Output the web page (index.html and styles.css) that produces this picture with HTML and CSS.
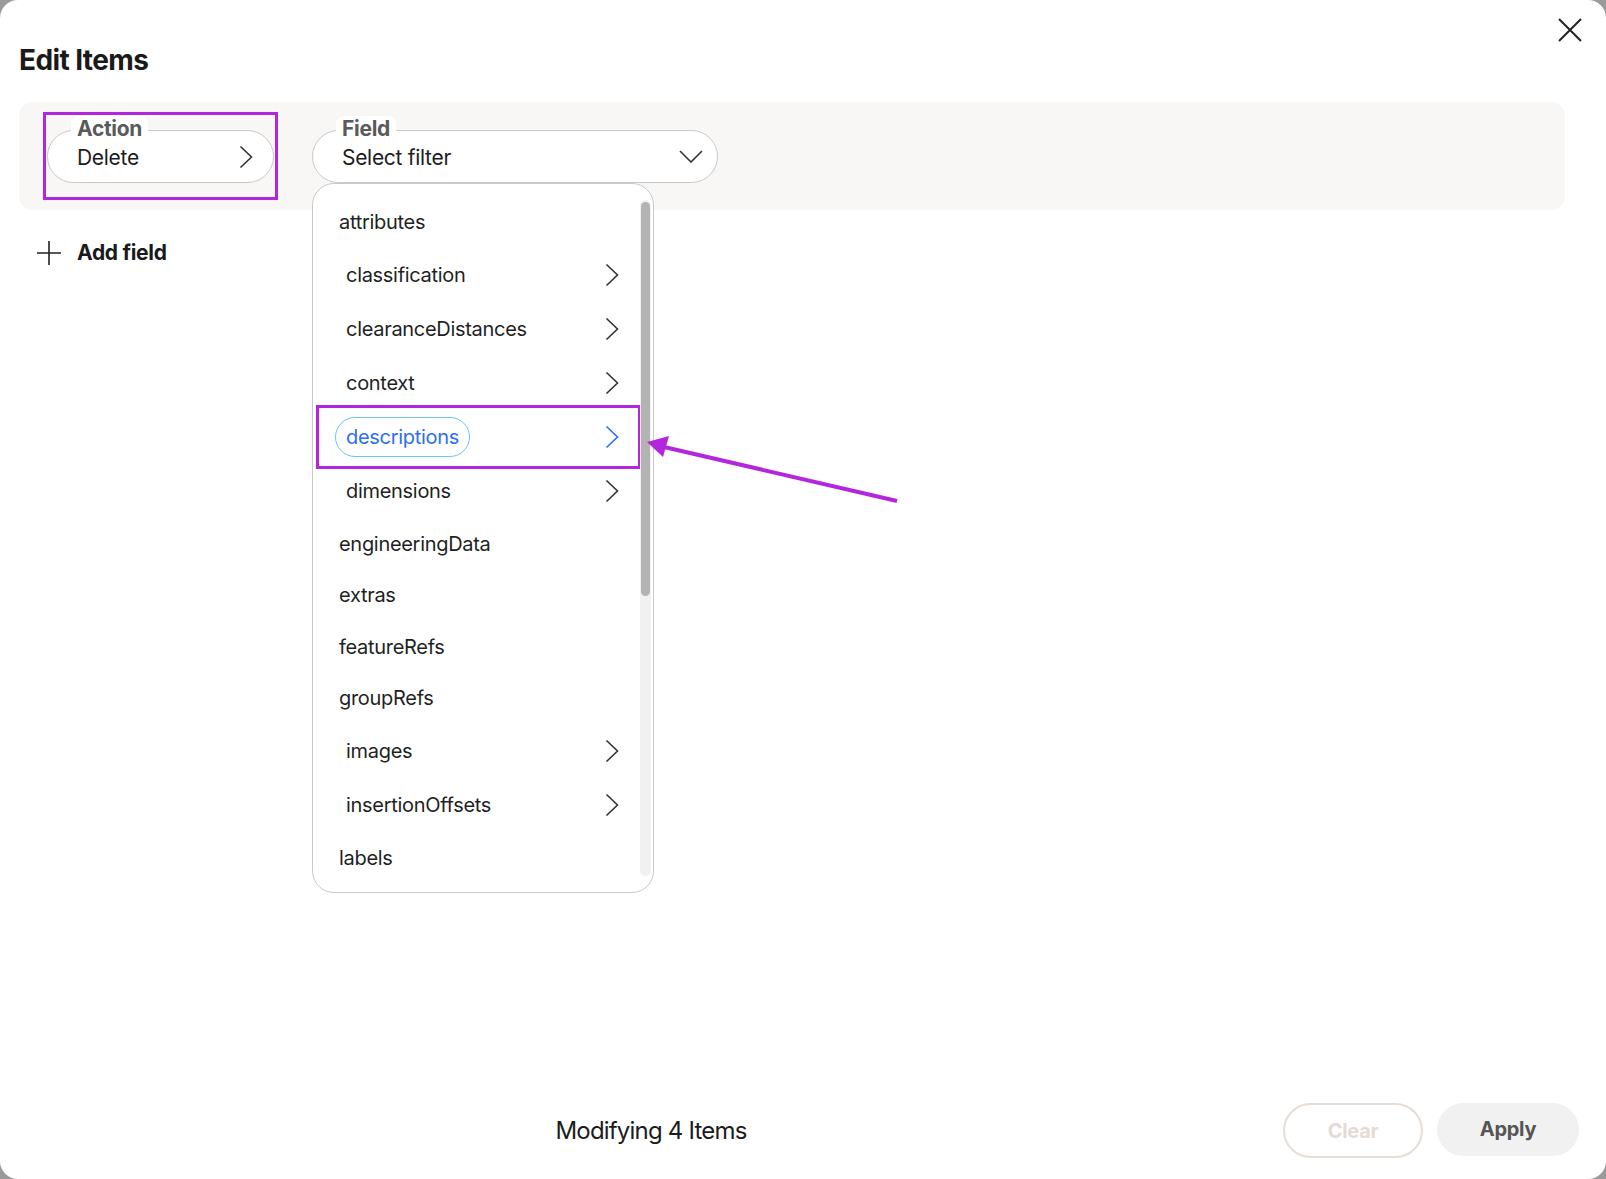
FILE: index.html
```html
<!DOCTYPE html>
<html lang="en">
<head>
  <meta charset="UTF-8" />
  <title>Edit Items</title>
  <link rel="stylesheet" href="styles.css">
</head>
<body>

  <div class="modal">
    <button class="close-btn" aria-label="Close">
      <svg width="24" height="24" viewBox="0 0 24 24"><path d="M1 1 L23 23 M23 1 L1 23" stroke="#222" stroke-width="2" fill="none"/></svg>
    </button>

    <h1 class="title">Edit Items</h1>

    <div class="filter-row">
      <div class="mark-box">
        <div class="pill-field action-field">
          <span class="pill-label">Action</span>
          <span class="pill-value">Delete</span>
          <svg class="chev-right" width="14" height="24" viewBox="0 0 14 24"><path d="M1.5 1.5 L12.5 12 L1.5 22.5" stroke="#333" stroke-width="1.6" fill="none"/></svg>
        </div>
      </div>

      <div class="field-wrap">
        <div class="pill-field select-field">
          <span class="pill-label">Field</span>
          <span class="pill-value">Select filter</span>
          <svg class="chev-down" width="24" height="13" viewBox="0 0 24 13"><path d="M1 1 L12 12 L23 1" stroke="#333" stroke-width="1.6" fill="none"/></svg>
        </div>

        <div class="dropdown">
          <ul class="option-list">
            <li class="opt">attributes</li>
            <li class="opt nested"><span class="opt-btn">classification</span><svg class="chev-right" width="14" height="24" viewBox="0 0 14 24"><path d="M1.5 1.5 L12.5 12 L1.5 22.5" stroke="#333" stroke-width="1.6" fill="none"/></svg></li>
            <li class="opt nested"><span class="opt-btn">clearanceDistances</span><svg class="chev-right" width="14" height="24" viewBox="0 0 14 24"><path d="M1.5 1.5 L12.5 12 L1.5 22.5" stroke="#333" stroke-width="1.6" fill="none"/></svg></li>
            <li class="opt nested"><span class="opt-btn">context</span><svg class="chev-right" width="14" height="24" viewBox="0 0 14 24"><path d="M1.5 1.5 L12.5 12 L1.5 22.5" stroke="#333" stroke-width="1.6" fill="none"/></svg></li>
            <li class="opt nested active"><span class="opt-btn">descriptions</span><svg class="chev-right" width="14" height="24" viewBox="0 0 14 24"><path d="M1.5 1.5 L12.5 12 L1.5 22.5" stroke="#2b6ef2" stroke-width="1.6" fill="none"/></svg><span class="mark-row"></span></li>
            <li class="opt nested"><span class="opt-btn">dimensions</span><svg class="chev-right" width="14" height="24" viewBox="0 0 14 24"><path d="M1.5 1.5 L12.5 12 L1.5 22.5" stroke="#333" stroke-width="1.6" fill="none"/></svg></li>
            <li class="opt">engineeringData</li>
            <li class="opt">extras</li>
            <li class="opt">featureRefs</li>
            <li class="opt">groupRefs</li>
            <li class="opt nested"><span class="opt-btn">images</span><svg class="chev-right" width="14" height="24" viewBox="0 0 14 24"><path d="M1.5 1.5 L12.5 12 L1.5 22.5" stroke="#333" stroke-width="1.6" fill="none"/></svg></li>
            <li class="opt nested"><span class="opt-btn">insertionOffsets</span><svg class="chev-right" width="14" height="24" viewBox="0 0 14 24"><path d="M1.5 1.5 L12.5 12 L1.5 22.5" stroke="#333" stroke-width="1.6" fill="none"/></svg></li>
            <li class="opt">labels</li>
          </ul>
          <div class="scroll-track"><div class="scroll-thumb"></div></div>
        </div>
      </div>
    </div>

    <button class="add-field">
      <svg width="24" height="24" viewBox="0 0 24 24"><path d="M12 0 V24 M0 12 H24" stroke="#222" stroke-width="1.6" fill="none"/></svg>
      <span>Add field</span>
    </button>

    <div class="spacer"></div>

    <div class="footer">
      <div class="footer-status">Modifying 4 Items</div>
      <button class="btn btn-clear">Clear</button>
      <button class="btn btn-apply">Apply</button>
    </div>

    <!-- annotation arrow -->
    <svg class="annot-arrow" width="1606" height="1179" viewBox="0 0 1606 1179">
      <path d="M897 501 L664 447" stroke="#b226de" stroke-width="4" fill="none"/>
      <path d="M647 442 L669 436 L663 457 Z" fill="#b226de"/>
    </svg>
  </div>

</body>
</html>
```

FILE: styles.css
```css
* {
  box-sizing: border-box;
}
body {
  margin: 0;
  background: #9a9a9a;
  font-family: "Inter", "Liberation Sans", sans-serif;
  color: #1c1c1c;
  overflow: hidden;
}
button {
  font-family: inherit;
  background: none;
  border: none;
  padding: 0;
  cursor: pointer;
}
.modal {
  position: relative;
  width: 1606px;
  height: 1179px;
  background: white;
  border-radius: 18px;
  padding: 43px 41px 21px 19px;
  display: flex;
  flex-direction: column;
}
.close-btn {
  position: absolute;
  top: 18px;
  right: 24px;
  width: 24px;
  height: 24px;
}
.close-btn svg {
  display: block;
}
.title {
  margin: 0;
  font-size: 28px;
  line-height: 34px;
  font-weight: 700;
  letter-spacing: -0.6px;
  color: #1a1a1a;
}

/* filter row */
.filter-row {
  margin-top: 25px;
  height: 108px;
  background: #f8f7f5;
  border-radius: 14px;
  padding: 0 24px;
  display: flex;
  align-items: center;
  gap: 34px;
}
.mark-box {
  border: 3px solid #b226de;
  padding: 15px 1px 13px 1px;
  width: 235px;
  height: 88px;
}
.pill-field {
  position: relative;
  height: 53px;
  border: 1.5px solid #c9c9c9;
  border-radius: 30px;
  background: white;
  display: flex;
  align-items: center;
  padding-left: 29px;
}
.pill-label {
  position: absolute;
  top: -15px;
  left: 23px;
  padding: 2px 6px;
  background: white;
  border-radius: 8px;
  font-size: 21px;
  line-height: 22px;
  font-weight: 700;
  color: #5a5a5a;
  letter-spacing: -0.3px;
}
.pill-value {
  flex: 1;
  font-size: 21px;
  letter-spacing: -0.3px;
  color: #1c1c1c;
  padding-top: 2px;
}
.action-field .chev-right {
  margin-right: 20px;
}
.select-field {
  width: 406px;
}
.select-field .chev-down {
  margin-right: 14px;
}
.field-wrap {
  position: relative;
}

/* dropdown */
.dropdown {
  position: absolute;
  top: 100%;
  left: 0;
  width: 342px;
  height: 710px;
  background: white;
  border: 1.5px solid #c9c9c9;
  border-radius: 22px;
  z-index: 5;
}
.option-list {
  list-style: none;
  margin: 0;
  padding: 13px 0 0 0;
}
.opt {
  position: relative;
  height: 51.5px;
  display: flex;
  align-items: center;
  padding-left: 26px;
  padding-right: 34px;
  font-size: 20px;
  letter-spacing: -0.3px;
  color: #1f1f1f;
}
.opt.nested {
  height: 54px;
  padding-left: 22px;
  justify-content: space-between;
}
.opt-btn {
  height: 40px;
  display: flex;
  align-items: center;
  padding: 0 10px;
  border: 1.5px solid transparent;
  border-radius: 20px;
}
.opt.active .opt-btn {
  border-color: #6cc5f6;
  color: #2b6ef2;
}
.mark-row {
  position: absolute;
  top: -5px;
  bottom: -5px;
  left: 3px;
  right: 12px;
  border: 3px solid #b226de;
}
.scroll-track {
  position: absolute;
  top: 16px;
  bottom: 16px;
  right: 2px;
  width: 11px;
  background: #f1f1f1;
  border-radius: 6px;
}
.scroll-thumb {
  margin: 2px 0 0 1px;
  width: 9px;
  height: 394px;
  background: #b3b3b3;
  border-radius: 5px;
}

/* add field */
.add-field {
  margin-top: 30px;
  margin-left: 18px;
  display: flex;
  align-items: center;
  gap: 16px;
  align-self: flex-start;
  font-size: 21px;
  font-weight: 700;
  letter-spacing: -0.3px;
  color: #1a1a1a;
}
.add-field svg {
  display: block;
}
.spacer {
  flex: 1;
}

/* footer */
.footer {
  display: flex;
  align-items: center;
  gap: 14px;
  margin-right: -14px;
}
.footer-status {
  flex: 1;
  text-align: center;
  padding-left: 14px;
  font-size: 24px;
  letter-spacing: -0.8px;
  color: #1c1c1c;
}
.btn {
  height: 55px;
  width: 140px;
  border-radius: 28px;
  font-size: 20px;
  font-weight: 700;
  letter-spacing: -0.3px;
}
.btn-clear {
  border: 2px solid #e6ddd6;
  color: #e4dbd4;
  background: white;
}
.btn-apply {
  width: 142px;
  height: 53px;
  margin-top: -3px;
  background: #f1f1f1;
  color: #555;
}

.annot-arrow {
  position: absolute;
  top: 0;
  left: 0;
  pointer-events: none;
  z-index: 10;
}
```
